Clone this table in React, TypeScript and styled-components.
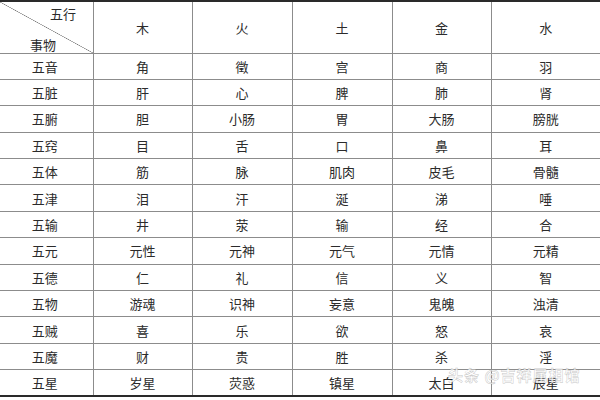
import React from 'react';
import styled, { createGlobalStyle } from 'styled-components';

const GlobalStyle = createGlobalStyle`
  html, body {
    margin: 0;
    padding: 0;
    background: #fff;
  }
`;

const Page = styled.div`
  position: relative;
  width: 600px;
  height: 400px;
  overflow: hidden;
  background: #fff;
  font-family: "Noto Sans CJK SC", "Liberation Serif", serif;
  color: #2b2b2b;
`;

const Table = styled.table`
  width: 600px;
  table-layout: fixed;
  border-collapse: collapse;
  border-top: 2px solid #2a2a2a;
  border-bottom: 2px solid #2a2a2a;
`;

const Col = styled.col<{ $w: number }>`
  width: ${p => p.$w}px;
`;

const HeadRow = styled.tr`
  height: 52px;
`;

const Row = styled.tr`
  height: 26.4px;
`;

const Cell = styled.td`
  border-left: 1px solid #8c8c8c;
  border-top: 1px solid #8c8c8c;
  text-align: center;
  vertical-align: middle;
  font-size: 13px;
  font-weight: 400;
  line-height: 1;
  padding: 0;
  white-space: nowrap;

  &:first-child {
    border-left: none;
    padding-right: 3px;
  }
`;

const Corner = styled(Cell)`
  position: relative;
  background: linear-gradient(
    to top right,
    transparent calc(50% - 0.6px),
    #7a7a7a 50%,
    transparent calc(50% + 0.6px)
  );
`;

const CornerTop = styled.span`
  position: absolute;
  left: 50px;
  top: 5px;
`;

const CornerBottom = styled.span`
  position: absolute;
  left: 30px;
  top: 36px;
`;

const Watermark = styled.div`
  position: absolute;
  left: 448px;
  top: 364px;
  font-family: "Noto Sans CJK SC", sans-serif;
  font-size: 15px;
  font-weight: 700;
  color: rgba(255, 255, 255, 0.8);
  -webkit-text-stroke: 0.5px rgba(140, 140, 140, 0.5);
  letter-spacing: 1px;
  white-space: nowrap;
`;

const elements = ['木', '火', '土', '金', '水'];

const rows: [string, string[]][] = [
  ['五音', ['角', '徵', '宫', '商', '羽']],
  ['五脏', ['肝', '心', '脾', '肺', '肾']],
  ['五腑', ['胆', '小肠', '胃', '大肠', '膀胱']],
  ['五窍', ['目', '舌', '口', '鼻', '耳']],
  ['五体', ['筋', '脉', '肌肉', '皮毛', '骨髓']],
  ['五津', ['泪', '汗', '涎', '涕', '唾']],
  ['五输', ['井', '荥', '输', '经', '合']],
  ['五元', ['元性', '元神', '元气', '元情', '元精']],
  ['五德', ['仁', '礼', '信', '义', '智']],
  ['五物', ['游魂', '识神', '妄意', '鬼魄', '浊清']],
  ['五贼', ['喜', '乐', '欲', '怒', '哀']],
  ['五魔', ['财', '贵', '胜', '杀', '淫']],
  ['五星', ['岁星', '荧惑', '镇星', '太白', '辰星']],
];

const widths = [93, 99, 100, 100, 99, 109];

export default function App() {
  return (
    <Page>
      <GlobalStyle />
      <Table>
        <colgroup>
          {widths.map((w, i) => <Col key={i} $w={w} />)}
        </colgroup>
        <thead>
          <HeadRow>
            <Corner>
              <CornerTop>五行</CornerTop>
              <CornerBottom>事物</CornerBottom>
            </Corner>
            {elements.map(e => <Cell key={e}>{e}</Cell>)}
          </HeadRow>
        </thead>
        <tbody>
          {rows.map(([name, items]) => (
            <Row key={name}>
              <Cell>{name}</Cell>
              {items.map((t, i) => <Cell key={i}>{t}</Cell>)}
            </Row>
          ))}
        </tbody>
      </Table>
      <Watermark>头条 @吉祥属相馆</Watermark>
    </Page>
  );
}
